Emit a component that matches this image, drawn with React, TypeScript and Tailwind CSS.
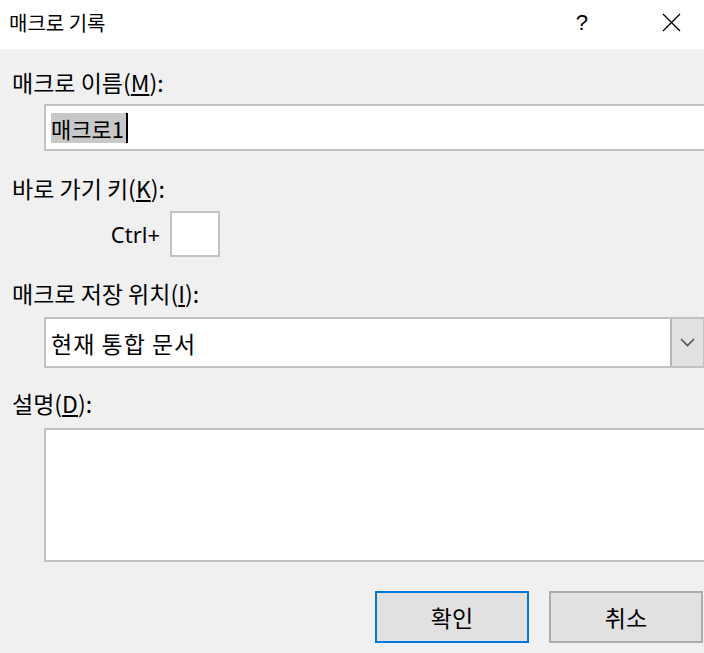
const font = { fontFamily: '"Noto Sans CJK KR", "Noto Sans", sans-serif' };

function Label({ text, accel }: { text: string; accel: string }) {
  return (
    <div className="text-[23px] leading-[30px] text-black pl-3">
      {text}(<span className="underline underline-offset-2">{accel}</span>):
    </div>
  );
}

export default function App() {
  return (
    <div className="w-[704px] h-[653px] overflow-hidden bg-[#f0f0f0] select-none" style={font}>
      {/* Title bar */}
      <div className="h-[49px] bg-white flex items-center justify-between pl-[9px] pb-[4px]">
        <span className="text-[20px] text-black">매크로 기록</span>
        <div className="flex items-center">
          <span className="text-[22px] text-black mr-[74px]" style={{ fontFamily: '"Liberation Sans", sans-serif' }}>
            ?
          </span>
          <svg width="19" height="19" viewBox="0 0 19 19" className="mr-[23px]">
            <path d="M1 1 L18 18 M18 1 L1 18" stroke="#000" strokeWidth="1.3" fill="none" />
          </svg>
        </div>
      </div>

      {/* Body */}
      <div className="w-[740px] pt-[18px]">
        <Label text="매크로 이름" accel="M" />
        <div className="mt-[7px] ml-[44px] h-[47px] bg-white border-2 border-[#c2c2c6] flex items-center pl-[5px]">
          <span className="bg-[#c8c8c8] text-[22px] leading-[30px] text-black pr-[2px]">매크로1</span>
          <span className="w-[2px] h-[30px] bg-black" />
        </div>

        <div className="mt-[22px]">
          <Label text="바로 가기 키" accel="K" />
        </div>
        <div className="mt-[8px] flex items-center">
          <div className="w-[162px] text-right text-[22px] text-black pr-[2px]" style={{ fontFamily: '"Noto Sans", sans-serif' }}>
            Ctrl+
          </div>
          <div className="ml-[8px] w-[50px] h-[46px] bg-white border-2 border-[#c2c2c6]" />
        </div>

        <div className="mt-[21px]">
          <Label text="매크로 저장 위치" accel="I" />
        </div>
        <div className="mt-[9px] ml-[44px] w-[661px] h-[51px] bg-white border-2 border-[#c2c2c6] flex items-center">
          <span className="flex-1 pl-[5px] text-[23px] leading-[30px] text-black tracking-[1px]">현재 통합 문서</span>
          <div className="w-[33px] h-full bg-[#e1e1e1] border-l-2 border-[#b4b4b4] flex items-center justify-center">
            <svg width="15" height="9" viewBox="0 0 15 9">
              <path d="M1 1 L7.5 7.5 L14 1" stroke="#505050" strokeWidth="1.6" fill="none" />
            </svg>
          </div>
        </div>

        <div className="mt-[20px]">
          <Label text="설명" accel="D" />
        </div>
        <div className="mt-[10px] ml-[44px] h-[134px] bg-white border-2 border-[#c2c2c6]" />

        <div className="mt-[29px] flex gap-[20px] pl-[375px]">
          <button className="w-[154px] h-[52px] bg-[#e1e1e1] border-2 border-[#0078d7] text-[23px] text-black">
            확인
          </button>
          <button className="w-[154px] h-[52px] bg-[#e1e1e1] border-2 border-[#adadad] text-[23px] text-black">
            취소
          </button>
        </div>
      </div>
    </div>
  );
}
